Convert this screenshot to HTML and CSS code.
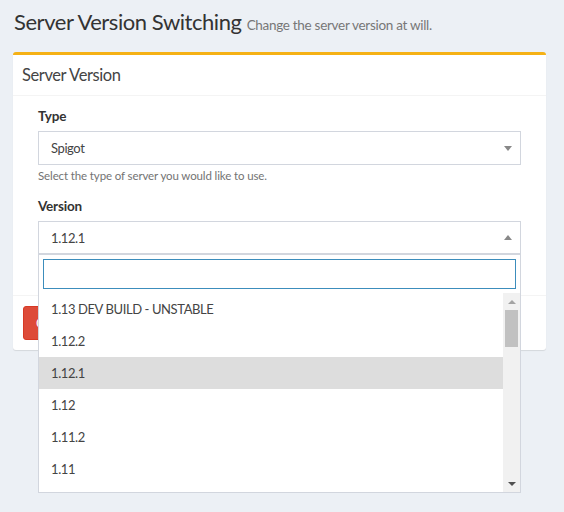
FILE: index.html
```html
<!DOCTYPE html>
<html>
<head>
<meta charset="utf-8">
<link rel="stylesheet" href="styles.css">
</head>
<body>
<header class="content-header">
  <h1 class="page-title">Server Version Switching <small class="subtitle">Change the server version at will.</small></h1>
</header>
<section class="content">
  <div class="box">
    <div class="box-header"><h3 class="box-title">Server Version</h3></div>
    <div class="box-body">
      <div class="form-group">
        <label class="label">Type</label>
        <div class="select"><span>Spigot</span><b class="arrow down"></b></div>
        <p class="help">Select the type of server you would like to use.</p>
      </div>
      <div class="form-group last">
        <label class="label">Version</label>
        <div class="select-wrap">
          <div class="select open"><span>1.12.1</span><b class="arrow up"></b></div>
          <div class="dropdown">
            <div class="search"><input class="search-input" type="text"></div>
            <div class="results">
              <ul class="options">
                <li class="option">1.13 DEV BUILD - UNSTABLE</li>
                <li class="option">1.12.2</li>
                <li class="option active">1.12.1</li>
                <li class="option">1.12</li>
                <li class="option">1.11.2</li>
                <li class="option">1.11</li>
              </ul>
              <div class="scrollbar">
                <div class="sb-btn"><b class="sb-arrow sb-up"></b></div>
                <div class="sb-track"><div class="sb-thumb"></div></div>
                <div class="sb-btn"><b class="sb-arrow sb-down"></b></div>
              </div>
            </div>
          </div>
        </div>
      </div>
    </div>
    <div class="box-footer"><button class="btn">Change Version</button></div>
  </div>
</section>
</body>
</html>
```
FILE: styles.css
```css
html {
  margin: 0;
  padding: 0;
  min-height: 100%;
  background: #ecf0f5;
}
body {
  margin: 0;
  padding: 0;
  min-height: 512px;
  background: #ecf0f5;
  font-family: Lato, "Open Sans", "Liberation Sans", sans-serif;
  font-size: 13px;
  letter-spacing: -0.4px;
  color: #333;
}
.content-header {
  padding: 9px 14px 0;
}
.page-title {
  margin: 0;
  font-size: 22px;
  font-weight: 400;
  line-height: 26px;
  letter-spacing: -0.45px;
  color: #333;
}
.subtitle {
  font-size: 13.5px;
  letter-spacing: -0.3px;
  color: #777;
  font-weight: 400;
}
.content {
  padding: 14px 18px 0 13px;
}
.box {
  background: #fff;
  border-top: 3px solid #f5b115;
  border-radius: 3px;
  box-shadow: 0 1px 1px rgba(0, 0, 0, 0.1);
}
.box-header {
  padding: 10px 9px 10px;
  border-bottom: 1px solid #f4f4f4;
}
.box-title {
  margin: 0;
  font-size: 16.5px;
  letter-spacing: -0.4px;
  line-height: 20px;
  font-weight: 400;
  color: #444;
}
.box-body {
  padding: 10px 25px 10px;
}
.form-group {
  margin-bottom: 12px;
}
.form-group.last {
  margin-bottom: 31px;
}
.label {
  display: block;
  font-weight: 700;
  font-size: 13.5px;
  letter-spacing: -0.2px;
  line-height: 20px;
  margin-bottom: 5px;
  color: #333;
}
.select {
  box-sizing: border-box;
  height: 34px;
  border: 1px solid #d2d6de;
  display: flex;
  align-items: center;
  justify-content: space-between;
  padding: 0 8px 0 12px;
  color: #444;
  background: #fff;
}
.select.open {
  height: 33px;
}
.arrow {
  width: 0;
  height: 0;
  border-left: 4px solid transparent;
  border-right: 4px solid transparent;
}
.arrow.down {
  border-top: 5px solid #888;
}
.arrow.up {
  border-bottom: 5px solid #888;
}
.help {
  margin: 3px 0 0;
  font-size: 11.5px;
  letter-spacing: -0.12px;
  line-height: 16px;
  color: #737373;
}
.select-wrap {
  position: relative;
}
.dropdown {
  position: absolute;
  top: 100%;
  left: 0;
  right: 0;
  z-index: 10;
  background: #fff;
  border: 1px solid #d2d6de;
}
.search {
  padding: 4px;
}
.search-input {
  display: block;
  box-sizing: border-box;
  width: 100%;
  height: 30px;
  margin: 0;
  border: 1px solid #3c8dbc;
  outline: none;
  padding: 0 6px;
  font: inherit;
}
.results {
  display: flex;
  height: 199px;
  overflow: hidden;
}
.options {
  list-style: none;
  margin: 0;
  padding: 0;
  flex: 1;
  overflow: hidden;
}
.option {
  padding: 6px 12px;
  line-height: 20px;
  color: #444;
}
.option.active {
  background: #ddd;
}
.scrollbar {
  width: 17px;
  background: #f1f1f1;
  display: flex;
  flex-direction: column;
}
.sb-btn {
  height: 17px;
  display: flex;
  align-items: center;
  justify-content: center;
}
.sb-track {
  flex: 1;
  padding: 0 2px;
}
.sb-thumb {
  height: 37px;
  background: #c1c1c1;
}
.sb-arrow {
  width: 0;
  height: 0;
  border-left: 4px solid transparent;
  border-right: 4px solid transparent;
}
.sb-up {
  border-bottom: 4px solid #a3a3a3;
}
.sb-down {
  border-top: 4px solid #505050;
}
.box-footer {
  border-top: 1px solid #f4f4f4;
  padding: 10px;
}
.btn {
  display: inline-block;
  height: 34px;
  padding: 6px 12px;
  font: inherit;
  line-height: 20px;
  color: #fff;
  background: #dd4b39;
  border: 1px solid #d73925;
  border-radius: 3px;
}
```
